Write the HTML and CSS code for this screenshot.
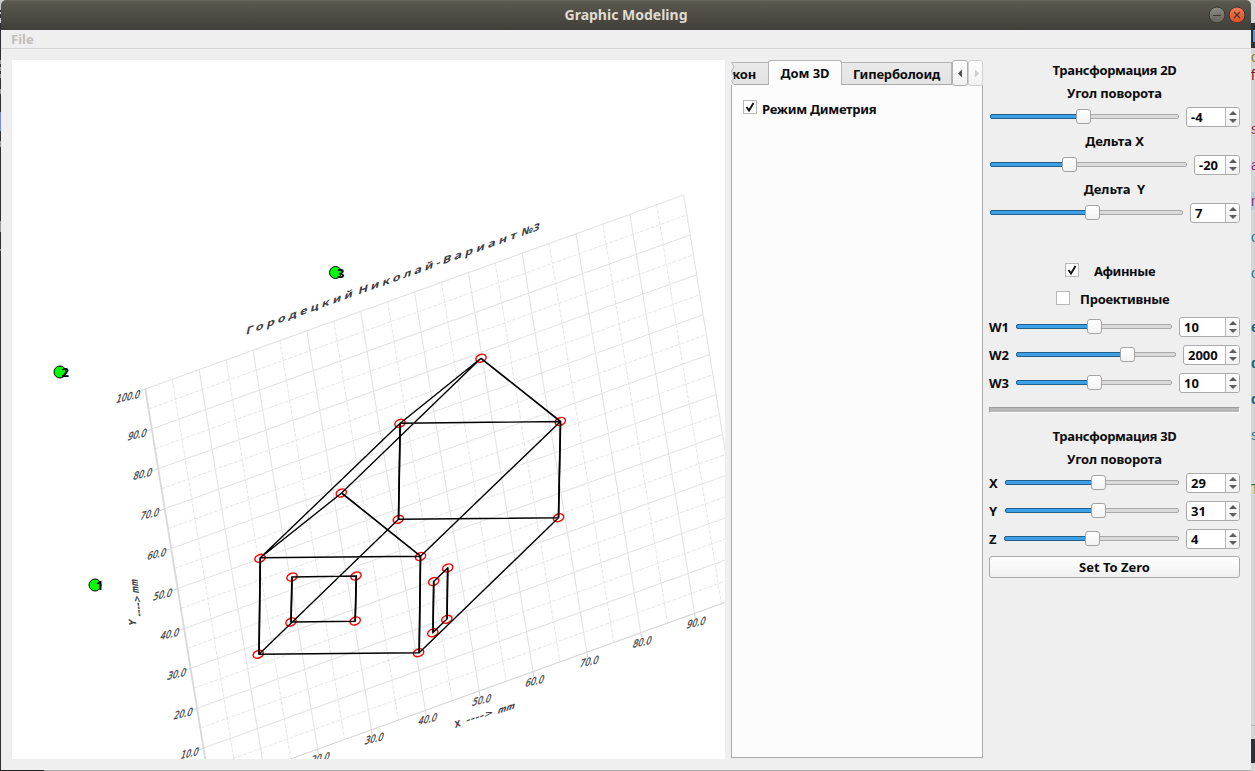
FILE: index.html
```html
<!DOCTYPE html>
<html lang="ru">
<head>
<meta charset="utf-8">
<title>Graphic Modeling</title>
<link rel="stylesheet" href="styles.css">
</head>
<body>
<div class="desktop">
  <svg class="edge-left" viewBox="0 0 1 771" width="1" height="771"><path fill="#302f33" d="M0 0h1v771h-1z"/><path fill="#c9c9c9" d="M0 0h1v10h-1zM0 12h1v2h-1zM0 18h1v5h-1z"/><path fill="#999" d="M0 60h1v4h-1zM0 67h1v4h-1zM0 74h1v4h-1zM0 89h1v5h-1zM0 141h1v6h-1zM0 221h1v11h-1zM0 249h1v2h-1z"/><path fill="#7c8cd0" d="M0 112h1v19h-1z"/></svg>
  <div class="window">
    <header class="titlebar">
      <span class="caption">Graphic Modeling</span>
      <svg class="controls" width="40" height="20" viewBox="0 0 40 20">
        <defs>
          <linearGradient id="min" x2="0" y2="1"><stop stop-color="#8d8c85"/><stop offset="1" stop-color="#63625c"/></linearGradient>
          <linearGradient id="close" x2="0" y2="1"><stop stop-color="#f47b57"/><stop offset="1" stop-color="#de4b1d"/></linearGradient>
        </defs>
        <circle cx="10" cy="10" r="8" fill="url(#min)" stroke="#383732"/><path d="M6 10.5h8" stroke="#3a3934"/>
        <circle cx="30" cy="10" r="8" fill="url(#close)" stroke="#383732"/><path d="M27 7l6 6m0-6l-6 6" stroke="#3a3934" stroke-width="1.2"/>
      </svg>
    </header>
    <nav class="menubar"><span>File</span></nav>
    <main class="content">
      <svg class="plot" width="713" height="699" viewBox="12 60 713 699">
        <g class="grid" transform="matrix(53.84 -19.4 6.47 39.9 145.3 389)">
          <path class="major" d="M0 0H10M0 1H10M0 2H10M0 3H10M0 4H10M0 5H10M0 6H10M0 7H10M0 8H10M0 9H10M1 0V10M2 0V10M3 0V10M4 0V10M5 0V10M6 0V10M7 0V10M8 0V10M9 0V10M10 0V10"/>
          <path class="minor" d="M0 .5H10M0 1.5H10M0 2.5H10M0 3.5H10M0 4.5H10M0 5.5H10M0 6.5H10M0 7.5H10M0 8.5H10M0 9.5H10M.5 0V10M1.5 0V10M2.5 0V10M3.5 0V10M4.5 0V10M5.5 0V10M6.5 0V10M7.5 0V10M8.5 0V10M9.5 0V10"/>
          <path class="axis-x" d="M0 10H10M2 10v.12M3 10v.12M4 10v.12M5 10v.12M6 10v.12M7 10v.12M8 10v.12M9 10v.12"/>
          <path class="axis-y" d="M0 0V10"/>
          <path class="axis-x" d="M0 0h-.09M0 1h-.09M0 2h-.09M0 3h-.09M0 4h-.09M0 5h-.09M0 6h-.09M0 7h-.09M0 8h-.09M0 9h-.09"/>
        </g>
        <g class="ticks">
          <text transform="matrix(1 -.22 -.3 1 115.500 403)" textLength="23.500" lengthAdjust="spacingAndGlyphs">100.0</text>
          <text transform="matrix(1 -.22 -.3 1 127 440.500)" textLength="18.500" lengthAdjust="spacingAndGlyphs">90.0</text>
          <text transform="matrix(1 -.22 -.3 1 132.500 480)" textLength="18.500" lengthAdjust="spacingAndGlyphs">80.0</text>
          <text transform="matrix(1 -.22 -.3 1 139.500 520)" textLength="18.500" lengthAdjust="spacingAndGlyphs">70.0</text>
          <text transform="matrix(1 -.22 -.3 1 146.500 560)" textLength="18.500" lengthAdjust="spacingAndGlyphs">60.0</text>
          <text transform="matrix(1 -.22 -.3 1 152.500 600.500)" textLength="18.500" lengthAdjust="spacingAndGlyphs">50.0</text>
          <text transform="matrix(1 -.22 -.3 1 159.500 640)" textLength="18.500" lengthAdjust="spacingAndGlyphs">40.0</text>
          <text transform="matrix(1 -.22 -.3 1 166.500 680)" textLength="18.500" lengthAdjust="spacingAndGlyphs">30.0</text>
          <text transform="matrix(1 -.22 -.3 1 173 719.500)" textLength="18.500" lengthAdjust="spacingAndGlyphs">20.0</text>
          <text transform="matrix(1 -.22 -.3 1 180 759)" textLength="17.500" lengthAdjust="spacingAndGlyphs">10.0</text>
          <text transform="matrix(1 -.22 -.3 1 310 764)" textLength="18.500" lengthAdjust="spacingAndGlyphs">20.0</text>
          <text transform="matrix(1 -.22 -.3 1 364 744.500)" textLength="18.500" lengthAdjust="spacingAndGlyphs">30.0</text>
          <text transform="matrix(1 -.22 -.3 1 417.500 725)" textLength="18.500" lengthAdjust="spacingAndGlyphs">40.0</text>
          <text transform="matrix(1 -.22 -.3 1 471.500 706)" textLength="18.500" lengthAdjust="spacingAndGlyphs">50.0</text>
          <text transform="matrix(1 -.22 -.3 1 524.500 687)" textLength="18.500" lengthAdjust="spacingAndGlyphs">60.0</text>
          <text transform="matrix(1 -.22 -.3 1 579 667.500)" textLength="18.500" lengthAdjust="spacingAndGlyphs">70.0</text>
          <text transform="matrix(1 -.22 -.3 1 632 648)" textLength="18.500" lengthAdjust="spacingAndGlyphs">80.0</text>
          <text transform="matrix(1 -.22 -.3 1 686 628.500)" textLength="18.500" lengthAdjust="spacingAndGlyphs">90.0</text>
        </g>
        <g class="axis-title">
          <text transform="matrix(1 -.32 .1 .8 455 728)" textLength="6" lengthAdjust="spacingAndGlyphs">X</text>
          <text transform="matrix(1 -.32 -.2 .8 465.500 723.500)" textLength="27" lengthAdjust="spacingAndGlyphs">----&gt;</text>
          <text transform="matrix(1 -.32 -.3 .9 497 714)" textLength="17" lengthAdjust="spacingAndGlyphs">mm</text>
          <text transform="matrix(-.12 -1 .9 .15 136.500 626)" textLength="6" lengthAdjust="spacingAndGlyphs">Y</text>
          <text transform="matrix(-.12 -1 .9 .15 142.500 617)" textLength="21" lengthAdjust="spacingAndGlyphs">----&gt;</text>
          <text transform="matrix(-.12 -1 .95 .15 139 593.500)" textLength="14" lengthAdjust="spacingAndGlyphs">mm</text>
        </g>
        <g class="plot-title" transform="matrix(1.2 -.43 -.2 1 245.500 335)">
          <text x="0" textLength="89">Городецкий</text>
          <text x="93.500" textLength="62.500">Николай</text>
          <text x="158.500">-</text>
          <text x="164" textLength="61.500">Вариант</text>
          <text x="229.500" textLength="15" lengthAdjust="spacingAndGlyphs">№3</text>
        </g>
        <g class="nodes">
          <ellipse transform="translate(260 558.3) rotate(-22)" rx="5.3" ry="3.7"/>
          <ellipse transform="translate(420.5 556.5) rotate(-22)" rx="5.3" ry="3.7"/>
          <ellipse transform="translate(418.6 652.7) rotate(-22)" rx="5.3" ry="3.7"/>
          <ellipse transform="translate(258.3 654.3) rotate(-22)" rx="5.3" ry="3.7"/>
          <ellipse transform="translate(341.3 493) rotate(-22)" rx="5.3" ry="3.7"/>
          <ellipse transform="translate(400 423.3) rotate(-22)" rx="5.3" ry="3.7"/>
          <ellipse transform="translate(560.3 421.5) rotate(-22)" rx="5.3" ry="3.7"/>
          <ellipse transform="translate(558.5 517.7) rotate(-22)" rx="5.3" ry="3.7"/>
          <ellipse transform="translate(398.3 519.3) rotate(-22)" rx="5.3" ry="3.7"/>
          <ellipse transform="translate(481 358.2) rotate(-22)" rx="5.3" ry="3.7"/>
          <ellipse transform="translate(292 577) rotate(-22)" rx="5.3" ry="3.7"/>
          <ellipse transform="translate(356 576) rotate(-22)" rx="5.3" ry="3.7"/>
          <ellipse transform="translate(355.2 621) rotate(-22)" rx="5.3" ry="3.7"/>
          <ellipse transform="translate(291 622) rotate(-22)" rx="5.3" ry="3.7"/>
          <ellipse transform="translate(433.7 581.5) rotate(-22)" rx="5.3" ry="3.7"/>
          <ellipse transform="translate(447.7 568) rotate(-22)" rx="5.3" ry="3.7"/>
          <ellipse transform="translate(446.8 619.3) rotate(-22)" rx="5.3" ry="3.7"/>
          <ellipse transform="translate(432.8 632.8) rotate(-22)" rx="5.3" ry="3.7"/>
        </g>
        <path class="house" d="M260.3 557.8L420.5 556.2L419.2 652.8L259 654.2ZM260.3 557.8L341.6 493L481 358.3L400.2 423.3ZM400.2 423.3L560.5 421.5L558.5 517.8L398.5 519.3ZM420.5 556.2L560.5 421.5M419.2 652.8L558.5 517.8M259 654.2L398.5 519.3M292 577L356.3 576L355.2 621.3L291 622ZM433.7 581.5L447.7 568L447 619L433 632.5Z"/>
        <path class="house strong" d="M341.6 493L420.5 556.2M481 358.3L560.5 421.5M260.3 557.8L259 654.2M420.5 556.2L419.2 652.8M400.2 423.3L398.5 519.3M560.5 421.5L558.5 517.8M292 577L291 622M356.3 576L355.2 621.3M433.7 581.5L433 632.5M447.7 568L447 619"/>
        <g class="pins">
          <circle cx="60" cy="372" r="6"/><circle cx="95" cy="585" r="6"/><circle cx="335.5" cy="272.5" r="6"/>
          <text x="61.5" y="377">2</text><text x="96" y="589.5">1</text><text x="337" y="278">3</text>
        </g>
      </svg>
      <section class="tabs">
        <div class="tabbar">
          <div class="tab cut"><span>кон</span></div>
          <div class="tab active"><span>Дом 3D</span></div>
          <div class="tab last"><span>Гиперболоид</span></div>
          <div class="scroll"><svg width="13" height="13"><path d="M8 2.5v8L4 6.500z" fill="#4d4d4d"/></svg></div>
          <div class="scroll off"><svg width="13" height="13"><path d="M6 2.500v8l4-4z" fill="#ccc"/></svg></div>
          <svg class="tear" width="4" height="23"><path fill="#efefef" d="M0 0h1l2 5-3 4 3 6-2 4 2 4H0z"/><path fill="none" stroke="#b5b5b5" d="M.5 0l2.500 5-2.500 4 2.500 6-2 4 1 3"/></svg>
        </div>
        <div class="page">
          <label class="check"><i class="box"><svg width="12" height="12"><path class="tick" d="M2.500 6l2.500 3.500L9.500 2"/></svg></i><span class="mode">Режим Диметрия</span></label>
        </div>
      </section>
      <aside class="panel">
        <div class="head"><span>Трансформация 2D</span></div>
        <div class="sub first"><span>Угол поворота</span></div>
        <div class="row r22"><div class="slider"><b style="width:94px"></b></div><div class="spin s54"><span>-4</span><i></i></div></div>
        <div class="delta"><span>Дельта X</span></div>
        <div class="row r22"><div class="slider"><b style="width:80px"></b></div><div class="spin s46"><span>-20</span><i></i></div></div>
        <div class="delta"><span>Дельта&nbsp; Y</span></div>
        <div class="row r22"><div class="slider"><b style="width:103px"></b></div><div class="spin s50"><span>7</span><i></i></div></div>
        <div class="checks">
          <label class="check"><i class="box"><svg width="12" height="12"><path class="tick" d="M2.500 6l2.500 3.500L9.500 2"/></svg></i><span class="aff">Афинные</span></label>
          <label class="check"><i class="box"></i><span class="proj">Проективные</span></label>
        </div>
        <div class="row"><span class="name w">W1</span><div class="slider"><b style="width:79px"></b></div><div class="spin s61"><span>10</span><i></i></div></div>
        <div class="row"><span class="name w">W2</span><div class="slider"><b style="width:112px"></b></div><div class="spin s57"><span>2000</span><i></i></div></div>
        <div class="row"><span class="name w">W3</span><div class="slider"><b style="width:79px"></b></div><div class="spin s61"><span>10</span><i></i></div></div>
        <div class="divider"></div>
        <div class="head"><span>Трансформация 3D</span></div>
        <div class="sub short"><span>Угол поворота</span></div>
        <div class="row"><span class="name x">X</span><div class="slider"><b style="width:94px"></b></div><div class="spin s54"><span>29</span><i></i></div></div>
        <div class="row"><span class="name x">Y</span><div class="slider"><b style="width:94px"></b></div><div class="spin s54"><span>31</span><i></i></div></div>
        <div class="row"><span class="name z">Z</span><div class="slider"><b style="width:89px"></b></div><div class="spin s54"><span>4</span><i></i></div></div>
        <button class="reset">Set To Zero</button>
      </aside>
    </main>
    <footer class="under"></footer>
  </div>
  <svg class="edge-right" viewBox="0 0 4 771" width="4" height="771">
    <path fill="#d5d5d5" d="M0 0h4v771H0z"/><path fill="#2f3136" d="M0 23h4v25H0z"/><path fill="#4e9ce6" d="M2 30h2v12H2z"/><path fill="#bccbd5" d="M0 192h4v18H0z"/>
    <path fill="#b5b5b5" d="M0 725h4v1H0z"/><path fill="#2f3136" d="M0 739h4v24H0z"/>
    <g class="code"><text y="62" fill="#8a8418">c</text><text y="80" fill="#7c1515">f</text><text y="134" fill="#a02a3a">s</text><text y="170" fill="#94308f">a</text><text y="206" fill="#94308f">n</text><text y="242" fill="#257e90">o</text><text y="278" fill="#257e90">o</text><text class="kw" y="332" fill="#0d6880">e</text><text class="kw" y="368" fill="#0d6880">d</text><text class="kw" y="404" fill="#0d6880">d</text><text y="440" fill="#257e90">s</text><text y="494" fill="#257d25">T</text></g>
  </svg>
</div>
</body>
</html>
```
FILE: styles.css
```css
* { box-sizing: border-box; }
body { margin: 0; overflow: hidden; background: #d5d5d5; font: bold 13px/16px "Noto Sans", "Open Sans", sans-serif; color: #0c0c0c; }
.desktop { display: flex; width: 1255px; height: 771px; }
.desktop > svg { display: block; flex: none; }
.window { width: 1250px; height: 771px; background: #efefef; display: flex; flex-direction: column; border-radius: 5px 5px 0 0; overflow: hidden; }
.titlebar { height: 30px; flex: none; display: grid; grid-template-columns: 1fr auto 1fr; align-items: center; background: linear-gradient(#6a675e 0, #5a574e 2px, #403f39 100%); color: #dfdbd2; font-size: 14px; }
.caption { grid-column: 2; }
.controls { justify-self: end; margin-right: 4px; }
.menubar { height: 19px; flex: none; border-bottom: 1px solid #d4d4d4; padding: 1px 0 0 10px; color: #bebebe; }
.content { display: flex; height: 721px; padding: 11px; flex: none; }
.plot { display: block; background: #fff; flex: none; }
.grid path { fill: none; vector-effect: non-scaling-stroke; }
.major { stroke: #e4e4e4; stroke-width: 1.1; }
.minor { stroke: #e6e6e6; stroke-width: 1; stroke-dasharray: 4 1.5; }
.axis-x { stroke: #d8d8d8; stroke-width: 1.1; }
.grid .axis-y { stroke: #d9d9d9; stroke-width: 1.8; }
.ticks { font: 11px "DejaVu Sans", sans-serif; fill: #404044; stroke: #404044; stroke-width: .3; }
.axis-title { font: bold 11px "DejaVu Sans", sans-serif; fill: #404044; }
.plot-title { font: bold 10.5px "Noto Sans", sans-serif; fill: #404044; }
.nodes { fill: none; stroke: #f00; stroke-width: 1.5; }
.house { fill: none; stroke: #000; stroke-width: 1.4; }
.strong { stroke-width: 1.7; }
.pins circle { fill: #0f0; stroke: #000; }
.pins text { font: bold 13px "Noto Sans", sans-serif; fill: #000; }

.tabs { width: 252px; margin-left: 6px; height: 698px; display: flex; flex-direction: column; flex: none; }
.tabbar { display: flex; align-items: flex-end; height: 25px; flex: none; position: relative; z-index: 1; }
.tab { height: 23px; background: linear-gradient(#e9e9e9, #e4e4e4); border: 1px solid #b5b5b5; border-bottom-color: #a9a9a9; display: flex; justify-content: center; align-items: center; flex: none; padding-top: 1px; }
.cut { width: 37px; border-left: 0; border-right: 0; padding-right: 12px; justify-content: flex-end; letter-spacing: -.2px; }
.active { width: 74px; height: 25px; background: #fcfcfc; border-bottom: 0; border-radius: 3px 3px 0 0; padding-top: 0; letter-spacing: -.1px; }
.last { width: 110px; border-left: 0; letter-spacing: -.2px; }
.scroll { width: 16px; height: 26px; margin-bottom: -1px; border: 1px solid #b0b0b0; border-radius: 3px; background: linear-gradient(#fff, #f0f0f0); display: flex; align-items: center; justify-content: center; flex: none; }
.scroll.off { width: 15px; border-color: #cfcfcf; }
.tear { position: absolute; left: 0; top: 2px; }
.page { flex: 1; background: #fcfcfc; border: 1px solid #ababab; border-top: 0; padding: 14px 0 0 11px; }
.check { display: flex; align-items: center; }
.box { width: 14px; height: 14px; border: 1px solid #b8b8b8; background: #fff; display: block; flex: none; }
.box svg { display: block; }
.tick { fill: none; stroke: #111; stroke-width: 1.9; }
.mode { margin: 2px 0 -2px 5px; letter-spacing: -.27px; }

.panel { width: 251px; margin-left: 6px; display: flex; flex-direction: column; }
.head, .sub, .delta { display: flex; justify-content: center; align-items: center; flex: none; white-space: pre; }
.head { height: 22px; padding-bottom: 2px; letter-spacing: -.33px; }
.sub { height: 24px; letter-spacing: -.15px; }
.sub.first { padding-bottom: 2px; }
.sub.short { height: 21px; }
.delta { height: 26px; letter-spacing: -.05px; }
.row { display: flex; align-items: center; height: 28px; flex: none; }
.r22 { height: 22px; }
.name { flex: none; }
.name.w { width: 26px; }
.name.x { width: 15px; }
.name.z { width: 14px; }
.slider { flex: 1; height: 5px; margin: 0 7px 1px 1px; border: 1px solid #a9a9a9; border-radius: 2px; background: #dadada; }
.slider b { display: flex; align-items: center; justify-content: flex-end; height: 5px; margin: -1px 0 0 -1px; border: 1px solid #245f8c; border-radius: 2px; background: #3ba0e6; }
.slider b::after { content: ""; flex: none; width: 13px; height: 13px; margin-right: -8px; border: 1px solid #a3a3a3; border-radius: 3px; background: linear-gradient(#fff, #f3f3f3); }
.spin { display: flex; height: 20px; flex: none; border: 1px solid #aaa; border-radius: 3px; background: #fff; overflow: hidden; }
.spin span { flex: 1; padding: 1px 0 0 4px; }
.spin i { width: 14px; border-left: 1px solid #b7b7b7; background: linear-gradient(#fcfcfc, #f1f1f1); display: flex; flex-direction: column; align-items: center; justify-content: center; gap: 4px; }
.spin i::before, .spin i::after { content: ""; border: 4px solid transparent; }
.spin i::before { border-top: 0; border-bottom-color: #5c5c5c; }
.spin i::after { border-bottom: 0; border-top-color: #5c5c5c; }
.s46 { width: 46px; } .s50 { width: 50px; } .s54 { width: 54px; } .s57 { width: 57px; } .s61 { width: 61px; }
.checks { margin-top: 32px; flex: none; }
.checks .check { height: 28px; padding-left: 76px; }
.checks .check + .check { padding-left: 67px; }
.checks + .row { margin-top: 1px; }
.aff { margin: 1px 0 0 15px; letter-spacing: -.4px; }
.proj { margin: 1px 0 0 10px; letter-spacing: -.25px; }
.divider { height: 6px; flex: none; margin: 10px 0 13px; background: #b8b8b8; border: 1px solid #9e9e9e; border-right-color: #fff; border-bottom-color: #fff; }
.reset { height: 22px; margin: 3px 0 0; padding: 0; border: 1px solid #aaa; border-radius: 3px; background: linear-gradient(#fff, #f0f0f0); font: inherit; color: inherit; flex: none; }
.under { height: 1px; background: linear-gradient(90deg, #222 43px, #aaa 43px); flex: none; }
.code { font: 14px "Liberation Sans", sans-serif; }
.kw { font-weight: bold; }
```
